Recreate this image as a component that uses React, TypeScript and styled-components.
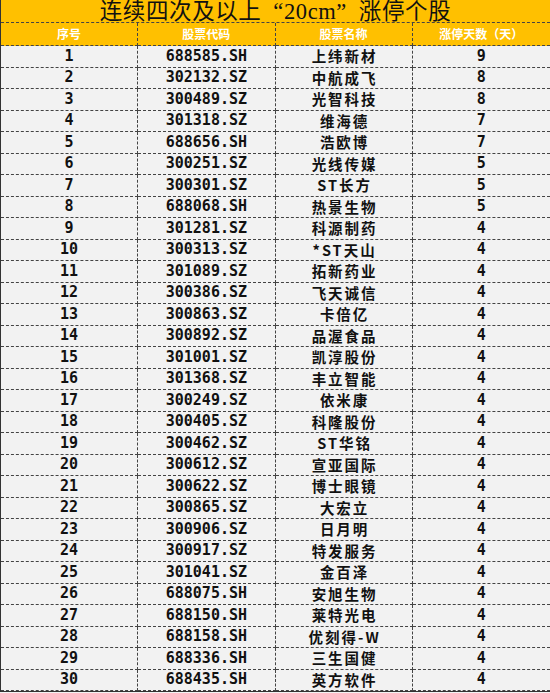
import React from "react";
import styled, { createGlobalStyle } from "styled-components";

const rows: [string, string, number][] = [
  ["688585.SH", "上纬新材", 9],
  ["302132.SZ", "中航成飞", 8],
  ["300489.SZ", "光智科技", 8],
  ["301318.SZ", "维海德", 7],
  ["688656.SH", "浩欧博", 7],
  ["300251.SZ", "光线传媒", 5],
  ["300301.SZ", "ST长方", 5],
  ["688068.SH", "热景生物", 5],
  ["301281.SZ", "科源制药", 4],
  ["300313.SZ", "*ST天山", 4],
  ["301089.SZ", "拓新药业", 4],
  ["300386.SZ", "飞天诚信", 4],
  ["300863.SZ", "卡倍亿", 4],
  ["300892.SZ", "品渥食品", 4],
  ["301001.SZ", "凯淳股份", 4],
  ["301368.SZ", "丰立智能", 4],
  ["300249.SZ", "依米康", 4],
  ["300405.SZ", "科隆股份", 4],
  ["300462.SZ", "ST华铭", 4],
  ["300612.SZ", "宣亚国际", 4],
  ["300622.SZ", "博士眼镜", 4],
  ["300865.SZ", "大宏立", 4],
  ["300906.SZ", "日月明", 4],
  ["300917.SZ", "特发服务", 4],
  ["301041.SZ", "金百泽", 4],
  ["688075.SH", "安旭生物", 4],
  ["688150.SH", "莱特光电", 4],
  ["688158.SH", "优刻得-W", 4],
  ["688336.SH", "三生国健", 4],
  ["688435.SH", "英方软件", 4],
];

const GlobalStyle = createGlobalStyle`
  body {
    margin: 0;
    background: #f2f2f2;
  }
`;

const Table = styled.div`
  width: 550px;
  box-sizing: border-box;
  display: grid;
  grid-template-columns: repeat(4, 1fr);
  border-left: 1px solid #333;
  border-bottom: 1px solid #333;
  background: #f2f2f2;
`;

const Title = styled.div`
  grid-column: 1 / -1;
  height: 23px;
  box-sizing: border-box;
  background: #ffc000;
  border-bottom: 1px dashed #444;
  display: flex;
  align-items: center;
  justify-content: center;
  font-family: "Liberation Serif", "Noto Sans CJK SC", serif;
  font-size: 22.5px;
  line-height: 22px;
  letter-spacing: 0.6px;
  color: #111;
  padding-top: 1px;
`;

// full-width quotation marks, as the spreadsheet font draws them
const Quote = styled.span<{ $open?: boolean }>`
  display: inline-block;
  width: 1em;
  text-align: ${(p) => (p.$open ? "right" : "left")};
`;

const Cell = styled.div<{ $head?: boolean; $last?: boolean; $cjk?: boolean }>`
  height: ${(p) => (p.$head ? "23px" : "21.5px")};
  box-sizing: border-box;
  display: flex;
  align-items: center;
  justify-content: center;
  border-bottom: 1px dashed #444;
  border-right: ${(p) => (p.$last ? "none" : "1px dashed #444")};
  background: ${(p) => (p.$head ? "#ffc000" : "#f2f2f2")};
  color: ${(p) => (p.$head ? "#fff" : "#111")};
  font-weight: bold;
  white-space: nowrap;
  font-family: ${(p) =>
    p.$head || p.$cjk
      ? '"Noto Sans CJK SC", sans-serif'
      : '"DejaVu Sans Mono", "Noto Sans CJK SC", monospace'};
  font-size: ${(p) => (p.$head ? "12px" : p.$cjk ? "14.5px" : "15px")};
  letter-spacing: ${(p) => (p.$cjk ? "2px" : "0")};
  padding-left: ${(p) => (p.$cjk ? "2px" : "0")};
  line-height: 1;
`;

export default function App() {
  return (
    <>
      <GlobalStyle />
      <Table>
        <Title>
          连续四次及以上<Quote $open>“</Quote>20cm<Quote>”</Quote>涨停个股
        </Title>
        <Cell $head>序号</Cell>
        <Cell $head>股票代码</Cell>
        <Cell $head>股票名称</Cell>
        <Cell $head $last>涨停天数（天）</Cell>
        {rows.map(([code, name, days], i) => (
          <React.Fragment key={code}>
            <Cell>{i + 1}</Cell>
            <Cell>{code}</Cell>
            <Cell $cjk>{name}</Cell>
            <Cell $last>{days}</Cell>
          </React.Fragment>
        ))}
      </Table>
    </>
  );
}
